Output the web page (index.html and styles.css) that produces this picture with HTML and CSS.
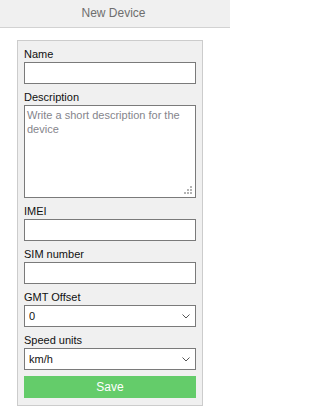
FILE: index.html
```html
<!DOCTYPE html>
<html lang="en">
<head>
<meta charset="utf-8">
<title>New Device</title>
<link rel="stylesheet" href="styles.css">
</head>
<body>
<div class="page">
<header class="topbar"><h1 class="title">New Device</h1></header>
<form class="panel">
  <div class="field">
    <label class="label">Name</label>
    <input class="input" type="text">
  </div>
  <div class="field">
    <label class="label">Description</label>
    <div class="area-wrap">
      <textarea class="textarea" placeholder="Write a short description for the device"></textarea>
      <svg class="grip" width="8" height="8" viewBox="0 0 8 8" aria-hidden="true">
        <rect x="6" y="0" width="2" height="2"/>
        <rect x="3" y="3" width="2" height="2"/>
        <rect x="6" y="3" width="2" height="2"/>
        <rect x="0" y="6" width="2" height="2"/>
        <rect x="3" y="6" width="2" height="2"/>
        <rect x="6" y="6" width="2" height="2"/>
      </svg>
    </div>
  </div>
  <div class="field">
    <label class="label">IMEI</label>
    <input class="input" type="text">
  </div>
  <div class="field">
    <label class="label">SIM number</label>
    <input class="input" type="text">
  </div>
  <div class="field">
    <label class="label">GMT Offset</label>
    <div class="select-wrap">
      <select class="select"><option>0</option></select>
      <svg class="chevron" width="8" height="5" viewBox="0 0 8 5" aria-hidden="true"><polyline points="0.5,0.5 4,4 7.5,0.5"/></svg>
    </div>
  </div>
  <div class="field">
    <label class="label">Speed units</label>
    <div class="select-wrap">
      <select class="select"><option>km/h</option></select>
      <svg class="chevron" width="8" height="5" viewBox="0 0 8 5" aria-hidden="true"><polyline points="0.5,0.5 4,4 7.5,0.5"/></svg>
    </div>
  </div>
  <button class="save" type="button">Save</button>
</form>
</div>
</body>
</html>
```
FILE: styles.css
```css
html, body {
  margin: 0;
  padding: 0;
  background: #ffffff;
}
body {
  font-family: "Liberation Sans", Arial, sans-serif;
  font-size: 11px;
  color: #111111;
}
.page {
  width: 230px;
  overflow: hidden;
}
.topbar {
  height: 27px;
  background: #f0f0f0;
  border-bottom: 1px solid #d2d2d2;
}
.title {
  margin: 0;
  padding-right: 3px;
  font-size: 12px;
  font-weight: normal;
  line-height: 27px;
  text-align: center;
  color: #6e6e6e;
}
.panel {
  width: 172px;
  margin: 12px 0 0 17px;
  padding: 6px 6px 7px;
  border: 1px solid #cccccc;
  background: #f0f0f0;
}
.field {
  display: flex;
  flex-direction: column;
  margin-bottom: 6px;
}
.label {
  line-height: 15px;
  color: #111111;
}
.input,
.select,
.textarea {
  display: block;
  width: 100%;
  box-sizing: border-box;
  margin: 0;
  border: 1px solid #7a7a7a;
  border-radius: 0;
  background: #ffffff;
  font-family: inherit;
  font-size: 11px;
  color: #111111;
  outline: none;
}
.input {
  height: 22px;
  padding: 0 4px;
}
.area-wrap,
.select-wrap {
  position: relative;
}
.textarea {
  height: 93px;
  padding: 2px 2px;
  line-height: 14px;
  resize: none;
}
.textarea::placeholder {
  color: #85858c;
}
.grip {
  position: absolute;
  right: 4px;
  bottom: 4px;
  fill: #b4b4b4;
}
.select {
  height: 22px;
  padding: 0 4px;
  appearance: none;
  -webkit-appearance: none;
}
.chevron {
  position: absolute;
  right: 6px;
  top: 9px;
  fill: none;
  stroke: #555555;
  stroke-width: 1;
}
.save {
  display: block;
  width: 100%;
  height: 22px;
  margin: 1px 0 0;
  padding: 0;
  border: none;
  border-radius: 0;
  background: #64cc6a;
  color: #ffffff;
  font-family: inherit;
  font-size: 12px;
}
```
